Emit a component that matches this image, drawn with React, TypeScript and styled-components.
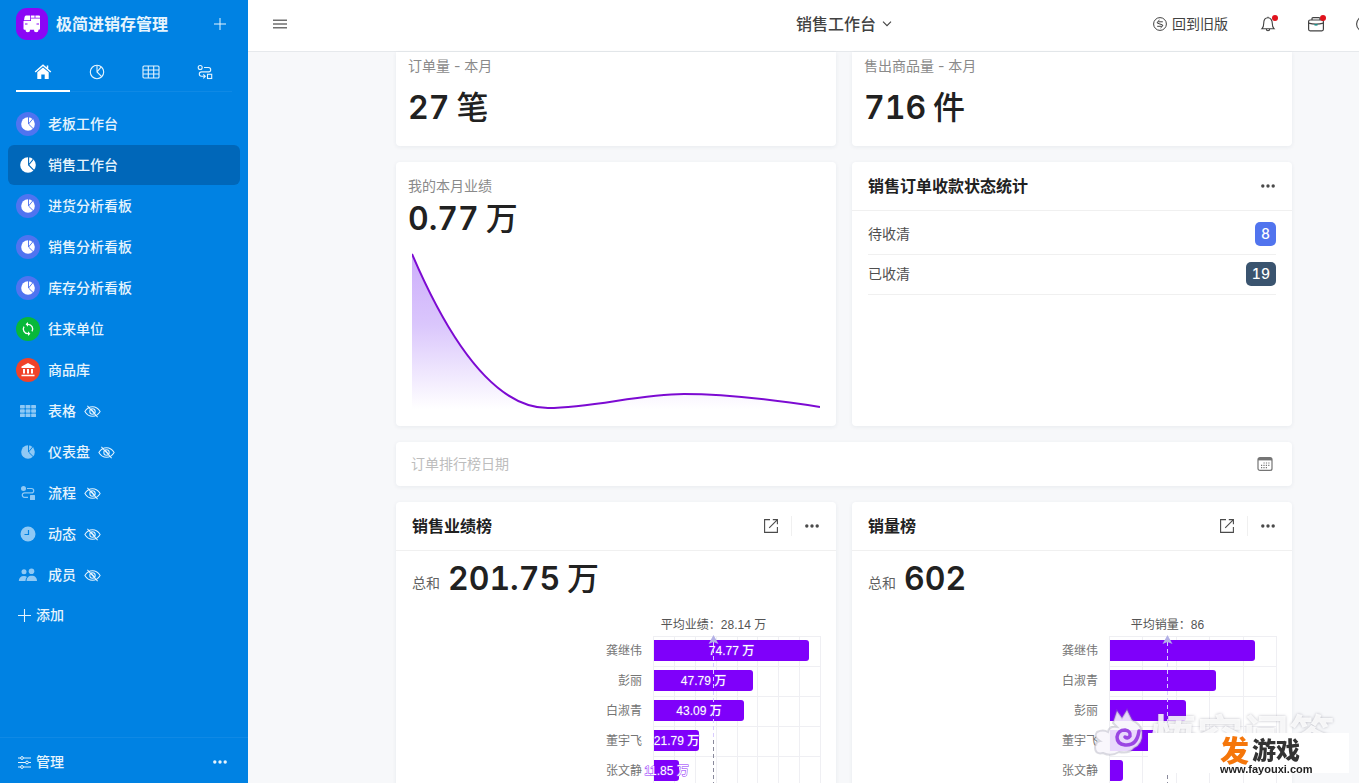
import React from "react";
import styled, { createGlobalStyle } from "styled-components";

const GlobalStyle = createGlobalStyle`
  *, *::before, *::after { box-sizing: border-box; }
  body {
    margin: 0;
    font-family: Inter, "Noto Sans CJK SC", sans-serif;
    font-size: 14px;
    line-height: 20px;
    color: #212121;
    overflow: hidden;
  }
  button, input { font: inherit; color: inherit; border: 0; padding: 0; background: none; }
  button { cursor: pointer; }
  a { color: inherit; text-decoration: none; }
  h1, h2, p, ul { margin: 0; padding: 0; font-size: inherit; font-weight: inherit; }
  ul { list-style: none; }
  svg { display: block; flex: none; }
`;

/* ---------- layout ---------- */

const Shell = styled.div`
  display: flex;
  height: 100vh;
  overflow: hidden;
`;

const Sidebar = styled.aside`
  display: flex;
  flex-direction: column;
  flex: none;
  width: 248px;
  background: #0082e3;
  color: #e6f4fd;
`;

const Main = styled.div`
  display: flex;
  flex-direction: column;
  flex: 1;
  min-width: 0;
  margin-right: -81px;
  background: #f7f8fa;
`;

/* ---------- sidebar ---------- */

const Brand = styled.header`
  display: flex;
  align-items: center;
  gap: 8px;
  height: 48px;
  padding: 0 20px 0 16px;
`;

const BrandLogo = styled.span`
  display: grid;
  place-items: center;
  width: 32px;
  height: 32px;
  border-radius: 11px;
  background: #8b06f5;
  color: #fff;
`;

const BrandName = styled.h1`
  flex: 1;
  font-size: 16px;
  line-height: 24px;
  font-weight: 600;
`;

const IconButton = styled.button<{ $size?: number }>`
  display: grid;
  place-items: center;
  flex: none;
  width: ${(p) => p.$size ?? 16}px;
  height: ${(p) => p.$size ?? 16}px;
`;

const Tabs = styled.nav`
  display: grid;
  grid-template-columns: repeat(4, 1fr);
  margin: 4px 16px 12px;
  height: 40px;
  border-bottom: 1px solid #0f89e5;
`;

const Tab = styled.button<{ $active?: boolean }>`
  display: grid;
  place-items: center;
  height: 40px;
  padding-top: 2px;
  border-bottom: 2px solid ${(p) => (p.$active ? "#fff" : "transparent")};
`;

const Menu = styled.ul`
  display: flex;
  flex-direction: column;
  flex: 1;
  gap: 1px;
  padding: 0 8px;
`;

const MenuLink = styled.a<{ $active?: boolean }>`
  display: flex;
  align-items: center;
  gap: 8px;
  height: 40px;
  padding: 0 8px;
  border-radius: 6px;
  font-weight: 500;
  background: ${(p) => (p.$active ? "#0067b9" : "transparent")};
`;

const MenuIcon = styled.span<{ $bg?: string; $dim?: boolean }>`
  display: grid;
  place-items: center;
  width: 24px;
  height: 24px;
  border-radius: 50%;
  background: ${(p) => p.$bg ?? "transparent"};
  color: ${(p) => (p.$dim ? "#8fc9f5" : "#fff")};
`;

const TextButton = styled.button`
  display: flex;
  align-items: center;
  gap: 5px;
  font-weight: 500;
`;

const AddRow = styled.li`
  padding: 9px 10px;
`;

const SidebarFooter = styled.footer`
  display: flex;
  align-items: center;
  justify-content: space-between;
  padding: 14px 20px 11px 18px;
  border-top: 1px solid #0f89e5;
`;

/* ---------- top bar ---------- */

const TopBar = styled.header`
  display: grid;
  grid-template-columns: 1fr auto 1fr;
  align-items: center;
  flex: none;
  height: 52px;
  padding: 0 24px 4px;
  background: #fff;
  border-bottom: 1px solid #e6e9ec;
  color: #424242;
`;

const PageSwitch = styled.button`
  display: flex;
  align-items: center;
  gap: 6px;
  font-size: 16px;
  line-height: 24px;
  font-weight: 500;
`;

const TopActions = styled.div`
  display: flex;
  align-items: center;
  justify-content: flex-end;
  gap: 32px;
  padding-right: 44px;
`;

const LegacyLink = styled.a`
  display: flex;
  align-items: center;
  gap: 5px;
`;

const Notify = styled(IconButton)`
  position: relative;
  &::after {
    content: "";
    position: absolute;
    top: -1px;
    right: -2px;
    width: 6px;
    height: 6px;
    border-radius: 50%;
    background: #e0121c;
  }
`;

/* ---------- cards ---------- */

const Board = styled.main`
  display: grid;
  grid-template-columns: 1fr 1fr;
  grid-template-rows: 94px 264px 44px auto;
  gap: 16px;
  margin: 0 148px;
`;

const Card = styled.section<{ $flush?: boolean }>`
  min-width: 0;
  background: #fff;
  border-radius: ${(p) => (p.$flush ? "0 0 4px 4px" : "4px")};
  box-shadow: 0 1px 4px rgba(30, 50, 80, 0.07);
`;

const Metric = styled(Card)<{ $top: number; $gap: number }>`
  display: flex;
  flex-direction: column;
  gap: ${(p) => p.$gap}px;
  padding: ${(p) => p.$top}px 16px 0 12px;
`;

const Caption = styled.p`
  color: #8a8a8a;
`;

const Figure = styled.p`
  display: flex;
  align-items: baseline;
  gap: 7px;
  font-size: 32px;
  line-height: 40px;
  font-weight: 600;
  font-variant-numeric: tabular-nums;
  color: #212121;
`;

const Unit = styled.span`
  font-weight: 500;
`;

const TrendChart = styled.svg`
  width: calc(100% - 4px);
  height: 160px;
  margin: 7px 0 0 4px;
`;

const CardHead = styled.header`
  display: flex;
  align-items: center;
  gap: 12px;
  height: 49px;
  padding: 0 16px;
  border-bottom: 1px solid #f0f0f0;
  color: #4a4a4a;
`;

const CardTitle = styled.h2`
  flex: 1;
  font-size: 16px;
  line-height: 24px;
  font-weight: 600;
  color: #212121;
`;

const Divider = styled.span`
  width: 1px;
  height: 20px;
  background: #f0f0f0;
`;

const StatusList = styled.ul`
  padding: 4px 16px 0;
`;

const StatusRow = styled.li`
  display: flex;
  align-items: center;
  justify-content: space-between;
  height: 40px;
  padding-bottom: 1px;
  border-bottom: 1px solid #f0f0f0;
  color: #4f4f4f;
`;

const Count = styled.span<{ $bg: string }>`
  padding: 2px 6px;
  border-radius: 5px;
  background: ${(p) => p.$bg};
  color: #fff;
  font-weight: 500;
  font-variant-numeric: tabular-nums;
`;

const DateField = styled(Card)`
  grid-column: 1 / -1;
  display: flex;
  align-items: center;
  padding: 0 19px 0 15px;
  color: #757575;
`;

const DateInput = styled.input`
  flex: 1;
  min-width: 0;
  outline: none;
  &::placeholder { color: #bdbdbd; opacity: 1; }
`;

const Total = styled.div`
  display: flex;
  align-items: flex-end;
  gap: 8px;
  padding: 8px 16px 13px;
  color: #616161;
`;

const TotalLabel = styled.span`
  line-height: 32px;
`;

const RankChart = styled.svg`
  width: calc(100% - 32px);
  height: 196px;
  margin: 0 16px;
  font-family: "Liberation Sans", "Noto Sans CJK SC", sans-serif;
  font-size: 12px;
`;

/* ---------- watermarks ---------- */

const Watermark = styled.div`
  position: fixed;
  right: 24px;
  bottom: 20px;
  display: flex;
  align-items: center;
  gap: 6px;
  font-family: "Noto Sans CJK SC", sans-serif;
  font-size: 46px;
  line-height: 60px;
  font-weight: 700;
  color: rgba(255, 255, 255, 0.85);
  text-shadow: 0 0 3px rgba(90, 90, 110, 0.4);
  pointer-events: none;
`;

const SiteBadge = styled.div`
  position: fixed;
  right: 10px;
  bottom: 10px;
  width: 201px;
  height: 40px;
  padding-left: 72px;
  background: #fff;
`;

const SiteName = styled.p`
  display: flex;
  align-items: center;
  gap: 3px;
  height: 31px;
  font-family: "Noto Sans CJK SC", sans-serif;
  font-size: 24px;
  font-weight: 900;
  color: #333;
`;

const SiteInitial = styled.span`
  font-size: 29px;
  color: #f5760a;
`;

const SiteUrl = styled.p`
  font-family: "Liberation Sans", sans-serif;
  font-size: 11px;
  line-height: 10px;
  font-weight: 700;
  color: #222;
`;

/* ---------- icons ---------- */

type Size = { size?: number };

const PlusIcon = ({ size = 12 }: Size) => (
  <svg width={size} height={size} viewBox="0 0 12 12" stroke="currentColor" strokeWidth="1" fill="none">
    <path d="M6 0v12M0 6h12" />
  </svg>
);

const DotsIcon = () => (
  <svg width="16" height="16" viewBox="0 0 16 16" fill="currentColor">
    <circle cx="2.800" cy="8" r="1.700" /><circle cx="8" cy="8" r="1.700" /><circle cx="13.200" cy="8" r="1.700" />
  </svg>
);

const TruckIcon = () => (
  <svg width="20" height="20" viewBox="0 0 20 20" fill="currentColor">
    <path d="M4 1.500h4.200v4.800H2L2.600 3Q2.800 1.500 4 1.500zM9 1.500h3.600v2.200H9zM13.400 1.500H17q1 0 1 1v1.200h-4.600zM9 4.500h9v10.300q0 1-1 1H2.500q-1 0-1-1V7.100H9z" />
    <circle cx="5.800" cy="16" r="2.300" /><circle cx="14.200" cy="16" r="2.300" />
    <path d="M3 10h2.500M14.500 10H17" stroke="#8b06f5" strokeWidth="1" />
  </svg>
);

const HomeIcon = () => (
  <svg width="18" height="16" viewBox="0 0 18 16">
    <path d="M1.200 8L9 1.200 16.800 8M13.500 1.500v3" fill="none" stroke="#fff" strokeWidth="1.500" />
    <path d="M3.300 8.300L9 3.400l5.700 4.900V15h-4v-4.500H7.300V15h-4z" fill="#fff" />
  </svg>
);

const PieLineIcon = () => (
  <svg width="16" height="16" viewBox="0 0 16 16" fill="none" stroke="currentColor" strokeWidth="1.100">
    <circle cx="8" cy="8" r="6.700" />
    <path d="M8 1.300V8l4.700 4.700M8 8l4.200-5.100" />
  </svg>
);

const GridLineIcon = () => (
  <svg width="18" height="14" viewBox="0 0 18 14" fill="none" stroke="currentColor" strokeWidth="1.100">
    <rect x="1" y="1" width="16" height="12" rx="1" />
    <path d="M1 5h16M1 9h16M6.300 1v12M11.700 1v12" />
  </svg>
);

const FlowLineIcon = () => (
  <svg width="16" height="16" viewBox="0 0 16 16" fill="none" stroke="currentColor" strokeWidth="1.100">
    <circle cx="3.200" cy="3.500" r="2" />
    <path d="M7 3.500h4.500a2.200 2.200 0 0 1 0 4.400h-7a2.200 2.200 0 0 0 0 4.400H8M6.300 10.300l2 2-2 2" />
    <rect x="10.500" y="10.300" width="4.200" height="4.200" />
  </svg>
);

const PieIcon = ({ size = 14, cut = "#0082e3" }: Size & { cut?: string }) => (
  <svg width={size} height={size} viewBox="0 0 16 16">
    <circle cx="8" cy="8" r="7.800" fill="currentColor" />
    <path d="M8.600 0v8l5.800 5.800M8.600 8l4.800-5.800" fill="none" stroke={cut} strokeWidth="1.100" />
  </svg>
);

const SyncIcon = () => (
  <svg width="16" height="16" viewBox="0 0 16 16" fill="none" stroke="currentColor" strokeWidth="1.300">
    <path d="M8 3.300a4.700 4.700 0 0 1 4 7.100M8 12.700a4.700 4.700 0 0 1-4-7.100" />
    <path d="M8 .9v4.800L5.600 3.300zM8 15.100v-4.800l2.400 2.400z" fill="currentColor" stroke="none" />
  </svg>
);

const BankIcon = () => (
  <svg width="16" height="16" viewBox="0 0 16 16" fill="currentColor">
    <path d="M8 1L14.500 4.500V6h-13V4.500zM3 7h2v4.500H3zM7 7h2v4.500H7zM11 7h2v4.500h-2zM1.500 12.700h13v1.600h-13z" />
  </svg>
);

const GridIcon = () => (
  <svg width="16" height="12" viewBox="0 0 16 12" fill="currentColor">
    {[0, 4.3, 8.6].map((y) => [0, 5.6, 11.2].map((x) => <rect key={`${x}-${y}`} x={x} y={y} width="4.800" height="3.400" rx=".6" />))}
  </svg>
);

const FlowIcon = () => (
  <svg width="16" height="16" viewBox="0 0 16 16" fill="currentColor">
    <circle cx="3.500" cy="3.500" r="2.500" /><rect x="10" y="10" width="5" height="5" rx=".5" />
    <path d="M7 3.500h4.500a2.200 2.200 0 0 1 0 4.400h-7a2.200 2.200 0 0 0 0 4.400H8" fill="none" stroke="currentColor" strokeWidth="1.200" />
  </svg>
);

const ClockIcon = () => (
  <svg width="16" height="16" viewBox="0 0 16 16">
    <circle cx="8" cy="8" r="7.500" fill="currentColor" />
    <path d="M8.500 4v4.500H4.500" fill="none" stroke="#0082e3" strokeWidth="1.200" />
  </svg>
);

const PeopleIcon = () => (
  <svg width="20" height="14" viewBox="0 0 20 14" fill="currentColor">
    <circle cx="6" cy="3.800" r="2.500" /><circle cx="13.500" cy="3.300" r="2.800" />
    <path d="M.8 13c0-3 1.800-5 5.200-5 1.300 0 2.200.3 3 .9C8 10 7.500 11.300 7.500 13zM8.600 13c0-3.300 1.900-5.300 5.200-5.300S19 9.700 19 13z" />
  </svg>
);

const EyeOffIcon = () => (
  <svg width="17" height="13" viewBox="0 0 18 14" fill="none" stroke="currentColor" strokeWidth="1.100">
    <path d="M.8 7C3 3.300 5.800 1.800 9 1.800S15 3.300 17.200 7C15 10.700 12.200 12.200 9 12.200S3 10.700.8 7z" />
    <circle cx="9" cy="7" r="2.900" />
    <path d="M3.500 1l11 12M7.500 4.500l4 4.500" />
  </svg>
);

const SlidersIcon = () => (
  <svg width="13" height="13" viewBox="0 0 13 13" fill="none" stroke="currentColor" strokeWidth="1">
    <path d="M0 2h2.500M5.500 2H13M0 6.500h7.500M10.500 6.500H13M0 11h2.500M5.500 11H13" />
    <circle cx="4" cy="2" r="1.400" /><circle cx="9" cy="6.500" r="1.400" /><circle cx="4" cy="11" r="1.400" />
  </svg>
);

const MenuLinesIcon = () => (
  <svg width="14" height="10" viewBox="0 0 14 10" stroke="#707070" strokeWidth="1.600">
    <path d="M0 1.200h14M0 5h14M0 8.800h14" />
  </svg>
);

const ChevronIcon = () => (
  <svg width="10" height="6" viewBox="0 0 10 6" fill="none" stroke="currentColor" strokeWidth="1.100">
    <path d="M1 .7l4 4 4-4" />
  </svg>
);

const SwapCircleIcon = () => (
  <svg width="14" height="14" viewBox="0 0 14 14" fill="none" stroke="currentColor" strokeWidth="1">
    <circle cx="7" cy="7" r="6.400" />
    <path d="M9.800 4.800H5.200q-1.400.2-.9 1.300L9.700 8q.5 1.100-.9 1.300H4.200M6.500 3L4.600 4.800M7.500 11l1.900-1.800" />
  </svg>
);

const BellIcon = () => (
  <svg width="16" height="16" viewBox="0 0 16 16" fill="none" stroke="currentColor" strokeWidth="1.100">
    <path d="M8 1.800V.8M2 12.700h12c-1.400-1.300-1.700-2.600-1.700-5.200C12.300 4 10.500 1.800 8 1.800S3.700 4 3.700 7.500c0 2.600-.3 3.900-1.700 5.200zM6.300 13a1.700 1.700 0 0 0 3.400 0" />
  </svg>
);

const BriefcaseIcon = () => (
  <svg width="16" height="16" viewBox="0 0 16 16" fill="none" stroke="currentColor" strokeWidth="1.200">
    <rect x=".6" y="4" width="14.800" height="10.800" rx="1.500" />
    <path d="M4 4V2.600q0-1 1-1h6q1 0 1 1V4M.6 7.200q7.400 1.800 14.800 0" />
    <path d="M6.500 8.800h3" stroke="#1b8f8a" strokeWidth="1.600" />
  </svg>
);

const HelpIcon = () => (
  <svg width="16" height="16" viewBox="0 0 16 16" fill="none" stroke="currentColor" strokeWidth="1.100">
    <circle cx="8" cy="8" r="7.400" /><path d="M6 6.500a2 2 0 1 1 2 2v1.200M8 11v1" />
  </svg>
);

const OpenIcon = () => (
  <svg width="16" height="16" viewBox="0 0 16 16" fill="none" stroke="currentColor" strokeWidth="1.100">
    <path d="M7 1.600H1.600v12.800h12.800V9M9.800 1.600h4.600v4.600M14.200 1.800L6.200 9.800" />
  </svg>
);

const CalendarIcon = () => (
  <svg width="16" height="16" viewBox="0 0 16 16" fill="none" stroke="currentColor">
    <rect x="1" y="1.600" width="14" height="12.800" rx="2" strokeWidth="1.200" />
    <path d="M1 3.200h14" strokeWidth="2.400" />
    <path d="M6.500 7h7M4 9.300h8.500M4 11.600h6" strokeWidth="1.200" strokeDasharray="1.200 1.200" />
  </svg>
);

const CloudMascot = () => (
  <svg width="58" height="52" viewBox="0 0 58 52" fill="none">
    <path
      d="M26 16L30 4l5 7 5-8 5 10q9 4 10 12 1 12-8 16-5 6-15 4-8 5-16 1-8 2-8-6 0-5 5-6-7-4-3-9 6-3 11 0 1-6 9-5z"
      fill="rgba(248,246,252,.88)" stroke="rgba(140,140,160,.3)" strokeWidth="2"
    />
    <path d="M52 24q-2 15-14 14-8-1-8-8 1-7 8-7 6 1 5 6-2 3-5 1" stroke="#8722dd" strokeOpacity=".8" strokeWidth="3.500" strokeLinecap="round" />
  </svg>
);

/* ---------- data ---------- */

type Item = { label: string; icon: React.ReactNode; bg?: string; active?: boolean; hidden?: boolean };

const INDIGO = "#4f74f0";

const items: Item[] = [
  { label: "老板工作台", icon: <PieIcon cut={INDIGO} />, bg: INDIGO },
  { label: "销售工作台", icon: <PieIcon size={16} cut="#0067b9" />, active: true },
  { label: "进货分析看板", icon: <PieIcon cut={INDIGO} />, bg: INDIGO },
  { label: "销售分析看板", icon: <PieIcon cut={INDIGO} />, bg: INDIGO },
  { label: "库存分析看板", icon: <PieIcon cut={INDIGO} />, bg: INDIGO },
  { label: "往来单位", icon: <SyncIcon />, bg: "#08b83a" },
  { label: "商品库", icon: <BankIcon />, bg: "#f0432a" },
  { label: "表格", icon: <GridIcon />, hidden: true },
  { label: "仪表盘", icon: <PieIcon />, hidden: true },
  { label: "流程", icon: <FlowIcon />, hidden: true },
  { label: "动态", icon: <ClockIcon />, hidden: true },
  { label: "成员", icon: <PeopleIcon />, hidden: true },
];

type Bar = { name: string; width: number; value?: string };

type RankProps = {
  title: string;
  total: string;
  unit?: string;
  average: string;
  averageX: number;
  divisions: number;
  bars: Bar[];
};

const PLOT_LEFT = 242;
const PLOT_WIDTH = 167;
const ROW = 30;

const Rank = ({ title, total, unit, average, averageX, divisions, bars }: RankProps) => (
  <Card>
    <CardHead>
      <CardTitle>{title}</CardTitle>
      <IconButton aria-label="打开"><OpenIcon /></IconButton>
      <Divider />
      <IconButton aria-label="更多"><DotsIcon /></IconButton>
    </CardHead>
    <Total>
      <TotalLabel>总和</TotalLabel>
      <Figure>{total}{unit && <Unit>{unit}</Unit>}</Figure>
    </Total>
    <RankChart viewBox="0 0 408 196" preserveAspectRatio="xMaxYMin meet" overflow="visible">
      <g stroke="#efeff3">
        {Array.from({ length: divisions + 1 }, (_, i) => {
          const x = Math.round(PLOT_LEFT + (i * PLOT_WIDTH) / divisions) - 0.5;
          return <path key={i} d={`M${x} 24V196`} />;
        })}
        {[0, 1, 2, 3, 4].map((i) => (
          <path key={i} d={`M${PLOT_LEFT} ${24.5 + i * ROW}H${PLOT_LEFT + PLOT_WIDTH}`} />
        ))}
      </g>
      {bars.map((b, i) => {
        const y = 28 + i * ROW;
        const r = PLOT_LEFT + b.width;
        return (
          <g key={b.name}>
            <text x={PLOT_LEFT - 12} y={y + 15} textAnchor="end" fill="#757575">{b.name}</text>
            <path d={`M${PLOT_LEFT} ${y}H${r - 3}q3 0 3 3v15q0 3-3 3H${PLOT_LEFT}z`} fill="#7f00fa" />
            {b.value && (
              <text
                x={PLOT_LEFT + b.width / 2} y={y + 15} textAnchor="middle"
                fill="#fff" stroke="#8f2bfa" strokeWidth="1" paintOrder="stroke" fontWeight="500"
              >
                {b.value}
              </text>
            )}
          </g>
        );
      })}
      <path d={`M${averageX} 30V196`} stroke="#8a8a9c" strokeDasharray="4 3" />
      <path d={`M${averageX} 30V128`} stroke="#d9ccff" strokeDasharray="4 3" />
      <path d={`M${averageX} 23l5 9-5-2-5 2z`} fill="#b3b0e6" />
      <text x={averageX} y="17" textAnchor="middle" fill="#555">{average}</text>
    </RankChart>
  </Card>
);

export default function App() {
  return (
    <Shell>
      <GlobalStyle />
      <Sidebar>
        <Brand>
          <BrandLogo><TruckIcon /></BrandLogo>
          <BrandName>极简进销存管理</BrandName>
          <IconButton aria-label="新建"><PlusIcon /></IconButton>
        </Brand>
        <Tabs>
          <Tab $active aria-label="首页"><HomeIcon /></Tab>
          <Tab aria-label="仪表盘"><PieLineIcon /></Tab>
          <Tab aria-label="表格"><GridLineIcon /></Tab>
          <Tab aria-label="流程"><FlowLineIcon /></Tab>
        </Tabs>
        <Menu>
          {items.map((it) => (
            <li key={it.label}>
              <MenuLink href="#" $active={it.active}>
                <MenuIcon $bg={it.bg} $dim={it.hidden}>{it.icon}</MenuIcon>
                {it.label}
                {it.hidden && <EyeOffIcon />}
              </MenuLink>
            </li>
          ))}
          <AddRow><TextButton><PlusIcon size={13} />添加</TextButton></AddRow>
        </Menu>
        <SidebarFooter>
          <TextButton><SlidersIcon />管理</TextButton>
          <IconButton aria-label="更多"><DotsIcon /></IconButton>
        </SidebarFooter>
      </Sidebar>

      <Main>
        <TopBar>
          <IconButton aria-label="收起菜单"><MenuLinesIcon /></IconButton>
          <PageSwitch>销售工作台<ChevronIcon /></PageSwitch>
          <TopActions>
            <LegacyLink href="#"><SwapCircleIcon />回到旧版</LegacyLink>
            <Notify aria-label="通知"><BellIcon /></Notify>
            <Notify aria-label="工作"><BriefcaseIcon /></Notify>
            <IconButton aria-label="帮助"><HelpIcon /></IconButton>
          </TopActions>
        </TopBar>

        <Board>
          <Metric $flush $top={4} $gap={12}>
            <Caption>订单量 - 本月</Caption>
            <Figure>27<Unit>笔</Unit></Figure>
          </Metric>
          <Metric $flush $top={4} $gap={12}>
            <Caption>售出商品量 - 本月</Caption>
            <Figure>716<Unit>件</Unit></Figure>
          </Metric>

          <Metric $top={14} $gap={3}>
            <Caption>我的本月业绩</Caption>
            <Figure>0.77<Unit>万</Unit></Figure>
            <TrendChart viewBox="0 0 408 160" preserveAspectRatio="none">
              <defs>
                <linearGradient id="trend" x1="0" y1="0" x2="0" y2="1">
                  <stop offset="0" stopColor="#cdaefb" />
                  <stop offset=".45" stopColor="#dac6fc" />
                  <stop offset="1" stopColor="#fff" />
                </linearGradient>
              </defs>
              <path d="M0 6C45 111 91 160 136 160S227 146 272 146 363 152 408 159V160H0z" fill="url(#trend)" />
              <path d="M0 5C45 110 91 159 136 159S227 145 272 145 363 151 408 158" fill="none" stroke="#7c0ad2" strokeWidth="2" />
            </TrendChart>
          </Metric>

          <Card>
            <CardHead>
              <CardTitle>销售订单收款状态统计</CardTitle>
              <IconButton aria-label="更多"><DotsIcon /></IconButton>
            </CardHead>
            <StatusList>
              <StatusRow>待收清<Count $bg="#5174ee">8</Count></StatusRow>
              <StatusRow>已收清<Count $bg="#3a546f">19</Count></StatusRow>
            </StatusList>
          </Card>

          <DateField>
            <DateInput aria-label="订单排行榜日期" placeholder="订单排行榜日期" />
            <IconButton aria-label="选择日期"><CalendarIcon /></IconButton>
          </DateField>

          <Rank
            title="销售业绩榜"
            total="201.75"
            unit="万"
            average="平均业绩：28.14 万"
            averageX={301.5}
            divisions={8}
            bars={[
              { name: "龚继伟", width: 155, value: "74.77 万" },
              { name: "彭丽", width: 99, value: "47.79 万" },
              { name: "白淑青", width: 90, value: "43.09 万" },
              { name: "董宇飞", width: 45, value: "21.79 万" },
              { name: "张文静", width: 25, value: "11.85 万" },
            ]}
          />
          <Rank
            title="销量榜"
            total="602"
            average="平均销量：86"
            averageX={299.5}
            divisions={5}
            bars={[
              { name: "龚继伟", width: 145 },
              { name: "白淑青", width: 106 },
              { name: "彭丽", width: 76 },
              { name: "董宇飞", width: 46 },
              { name: "张文静", width: 13 },
            ]}
          />
        </Board>
      </Main>

      <Watermark><CloudMascot />悟空问答</Watermark>
      <SiteBadge>
        <SiteName><SiteInitial>发</SiteInitial>游戏</SiteName>
        <SiteUrl>www.fayouxi.com</SiteUrl>
      </SiteBadge>
    </Shell>
  );
}
